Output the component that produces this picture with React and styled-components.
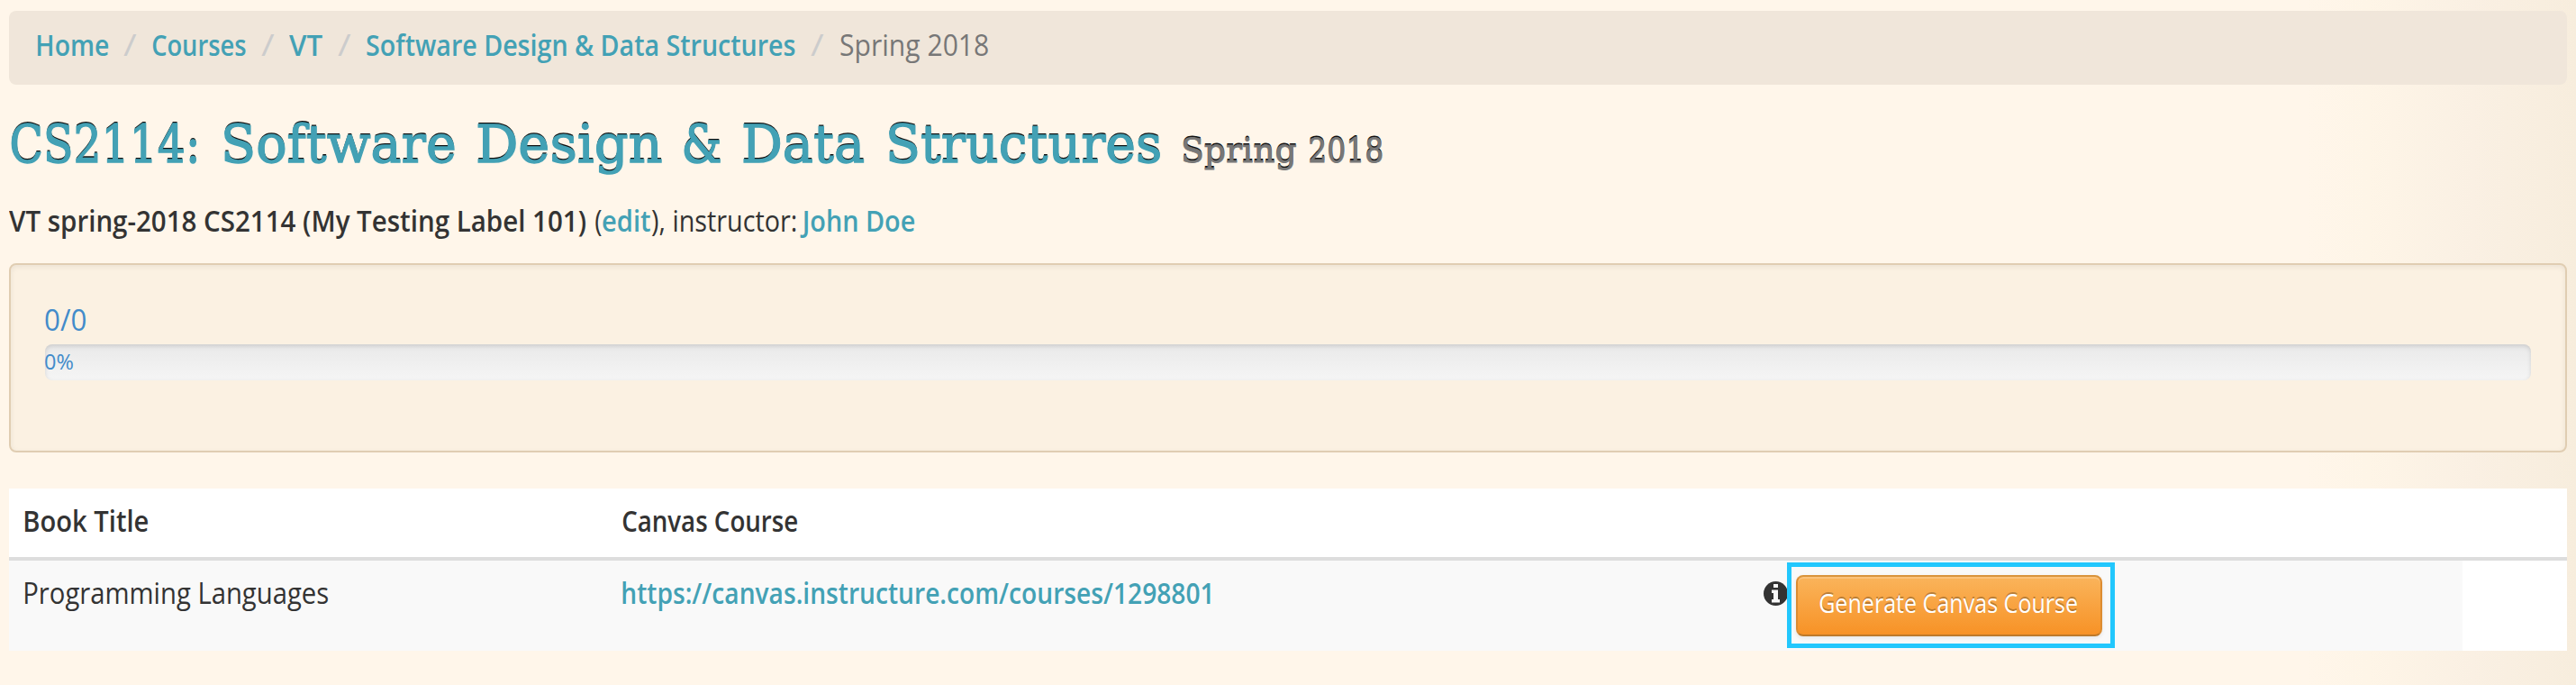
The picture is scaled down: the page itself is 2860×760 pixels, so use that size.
import React, { useLayoutEffect, useRef, useState } from 'react';
import styled, { createGlobalStyle, css } from 'styled-components';

const GlobalStyle = createGlobalStyle`
  * { box-sizing: border-box; }
  body {
    margin: 0;
    color: #333;
    font: 32px/46px "Open Sans", "Noto Sans", sans-serif;
    background: linear-gradient(to right, #fff6ea 0, #fff6ea 2560px, #fef5e7 2630px, #faf0e3 2745px, #f7eddd 2860px);
  }
`;

const Page = styled.div`
  width: 2860px;
  height: 760px;
  padding: 12px 10px 0;
  overflow: hidden;
`;

const Word = styled.span`
  display: block;
  flex: none;
  width: ${(p) => p.$w}px;
  margin-left: ${(p) => p.$gap || 0}px;
  white-space: nowrap;
  font-weight: ${(p) => p.$weight || 450};
  ${(p) => p.$color && css`color: ${p.$color};`}
`;

const Stretch = styled.span`
  display: inline-block;
  transform-origin: 0 50%;
`;

// Condenses a run of text so that its ink spans exactly the given width.
function Fit({ w, gap, weight, color, as, children }) {
  const ref = useRef(null);
  const [transform, setTransform] = useState('none');
  useLayoutEffect(() => {
    const s = getComputedStyle(ref.current);
    const ctx = document.createElement('canvas').getContext('2d');
    ctx.font = `${s.fontWeight} ${s.fontSize} ${s.fontFamily}`;
    const m = ctx.measureText(children);
    const k = w / (m.actualBoundingBoxLeft + m.actualBoundingBoxRight);
    setTransform(`translateX(${m.actualBoundingBoxLeft * k}px) scaleX(${k})`);
  }, [w, children]);
  return (
    <Word as={as} $w={w} $gap={gap} $weight={weight} $color={color}>
      <Stretch ref={ref} style={{ transform }}>{children}</Stretch>
    </Word>
  );
}

const Link = (props) => <Fit weight={600} color="#43a1b5" {...props} />;

const Breadcrumb = styled.nav`
  display: flex;
  height: 82px;
  padding: 15px 32px;
  border-radius: 8px;
  background: #f0e6da;
`;

const Title = styled.h1`
  display: flex;
  align-items: baseline;
  height: 80px;
  margin: 26px 0 0;
  padding-left: 3px;
  font: 400 57px/80px "DejaVu Serif", serif;
  color: #43a1b5;
  text-shadow: 0 -2px 0 #111;
  -webkit-text-stroke: 1.4px currentColor;
`;

const Term = styled.small`
  display: flex;
  margin-left: 26px;
  font-size: 37px;
  color: #777;
  -webkit-text-stroke: 0.8px currentColor;
`;

const Meta = styled.div`
  display: flex;
  height: 46px;
  margin-top: 22px;
`;

const Well = styled.section`
  height: 210px;
  margin-top: 24px;
  padding: 38px 38px 0;
  border: 2px solid #e0cdb2;
  border-radius: 8px;
  background: #fbf1e2;
  box-shadow: inset 0 2px 6px rgba(0, 0, 0, 0.07);
  color: #428bca;
`;

const Progress = styled.div`
  height: 40px;
  margin-top: 4px;
  border-radius: 8px;
  background: linear-gradient(#e9e9e9, #f5f5f5);
  box-shadow: inset 0 2px 5px rgba(0, 0, 0, 0.13);
  font-size: 24px;
  line-height: 37px;
`;

const Table = styled.div`
  height: 180px;
  margin-top: 40px;
  background: #fff;
`;

const HeadRow = styled.div`
  display: flex;
  height: 80px;
  padding: 13px 18px 0;
  border-bottom: 4px solid #ddd;
`;

const BodyRow = styled.div`
  display: flex;
  width: 2724px;
  height: 100px;
  padding: 2px 18px 0;
  background: #f9f9f9;
`;

const RowText = styled.div`
  display: flex;
  padding-top: 11px;
`;

const InfoIcon = styled.svg`
  width: 27px;
  height: 27px;
  margin: 21px -1px 0 614px;
`;

const Highlight = styled.div`
  width: 364px;
  height: 95px;
  padding: 9px 5px;
  border: 5px solid #22c7fd;
  z-index: 1;
`;

const Button = styled.button`
  display: flex;
  width: 340px;
  height: 68px;
  margin: 0;
  padding: 6px 24px;
  border: 2px solid;
  border-color: #d9943c #dc8c31 #bd792a;
  border-radius: 8px;
  background: linear-gradient(#fab45b, #f79226);
  box-shadow: inset 0 2px 0 rgba(255, 255, 255, 0.2), 0 2px 4px rgba(0, 0, 0, 0.08);
  color: #fff;
  font: 29px/46px "Open Sans", "Noto Sans", sans-serif;
  text-shadow: 0 -2px 0 rgba(0, 0, 0, 0.25);
`;

const Slash = () => <Fit w={15} gap={17} color="#ccc">/</Fit>;

export default function App() {
  return (
    <Page>
      <GlobalStyle />
      <Breadcrumb>
        <Link w={78}>Home</Link>
        <Slash />
        <Link w={104} gap={17}>Courses</Link>
        <Slash />
        <Link w={37} gap={16}>VT</Link>
        <Slash />
        <Link w={476} gap={17}>Software Design &amp; Data Structures</Link>
        <Slash />
        <Fit w={164} gap={18} color="#777">Spring 2018</Fit>
      </Breadcrumb>
      <Title>
        <Fit w={205} weight={400}>CS2114:</Fit>
        <Fit w={255} gap={31} weight={400}>Software</Fit>
        <Fit w={204} gap={27} weight={400}>Design</Fit>
        <Fit w={40} gap={25} weight={400}>&amp;</Fit>
        <Fit w={133} gap={26} weight={400}>Data</Fit>
        <Fit w={301} gap={28} weight={400}>Structures</Fit>
        <Term>
          <Fit w={125} weight={400}>Spring</Fit>
          <Fit w={81} gap={15} weight={400}>2018</Fit>
        </Term>
      </Title>
      <Meta>
        <Fit w={640} weight={600}>VT spring-2018 CS2114 (My Testing Label 101)</Fit>
        <Fit w={7} gap={11}>(</Fit>
        <Link w={53} gap={1}>edit</Link>
        <Fit w={161} gap={1}>), instructor:</Fit>
        <Link w={127} gap={4}>John Doe</Link>
      </Meta>
      <Well>
        <Fit w={45}>0/0</Fit>
        <Progress>
          <Fit w={31}>0%</Fit>
        </Progress>
      </Well>
      <Table>
        <HeadRow>
          <Fit w={136} weight={600}>Book Title</Fit>
          <Fit w={194} gap={527} weight={600}>Canvas Course</Fit>
        </HeadRow>
        <BodyRow>
          <RowText>
            <Fit w={336}>Programming Languages</Fit>
            <Link w={653} gap={327}>https://canvas.instructure.com/courses/1298801</Link>
          </RowText>
          <InfoIcon viewBox="0 0 27 27">
            <circle cx="13.5" cy="13.5" r="13.5" fill="#333" />
            <path d="M11 3h5v4h-5zM9 9.5h7V20h2v3.500H9V20h2v-7H9z" fill="#f9f9f9" />
          </InfoIcon>
          <Highlight>
            <Button>
              <Fit w={286}>Generate Canvas Course</Fit>
            </Button>
          </Highlight>
        </BodyRow>
      </Table>
    </Page>
  );
}
